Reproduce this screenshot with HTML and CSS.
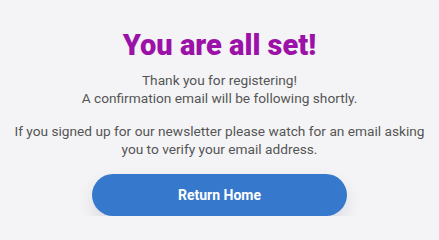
FILE: index.html
```html
<!DOCTYPE html>
<html>
<head>
<meta charset="utf-8">
<link rel="stylesheet" href="styles.css">
</head>
<body>
<main class="card">
  <h1 class="title">You are all set!</h1>
  <p class="msg">Thank you for registering!<br>A confirmation email will be following shortly.</p>
  <p class="msg">If you signed up for our newsletter please watch for an email asking you to verify your email address.</p>
  <a class="btn" href="#">Return Home</a>
</main>
</body>
</html>
```
FILE: styles.css
```css
html, body {
  margin: 0;
  padding: 0;
  background: #f4f4f6;
}
.card {
  display: flex;
  flex-direction: column;
  align-items: center;
  padding: 28px 4px 0;
  font-family: Roboto, "Liberation Sans", sans-serif;
  text-align: center;
}
.title {
  margin: 0 0 10px;
  font-family: Roboto, sans-serif;
  font-weight: 900;
  font-size: 29px;
  line-height: 34px;
  color: #9c12a8;
}
.msg {
  margin: 0 0 16px;
  font-size: 13.7px;
  line-height: 17.5px;
  color: #555;
  max-width: 431px;
}
.btn {
  margin-top: 0;
  width: 255px;
  height: 42px;
  border-radius: 21px;
  background: #3578cc;
  color: #fff;
  font-weight: 700;
  font-size: 14px;
  display: flex;
  align-items: center;
  justify-content: center;
  text-decoration: none;
  box-shadow: 0 8px 16px rgba(40, 50, 90, 0.12);
}
```
